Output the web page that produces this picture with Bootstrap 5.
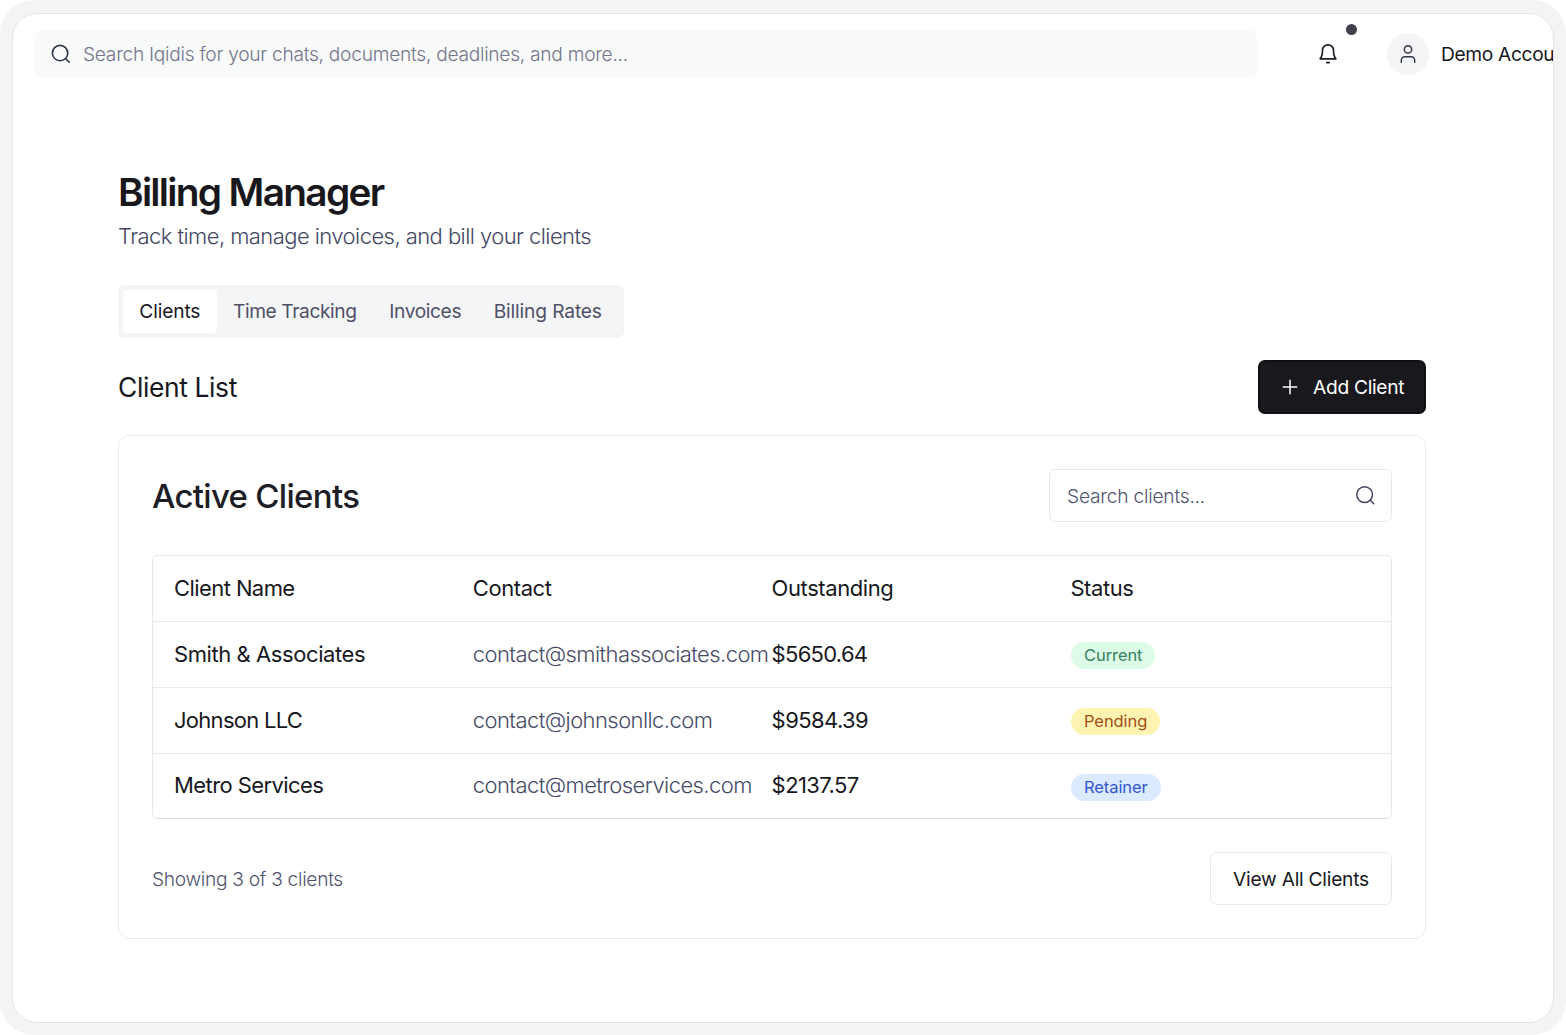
<!DOCTYPE html>
<html lang="en">
<head>
<meta charset="utf-8">
<meta name="viewport" content="width=device-width, initial-scale=1">
<title>Billing Manager</title>
<link href="https://cdn.jsdelivr.net/npm/bootstrap@5.3.0/dist/css/bootstrap.min.css" rel="stylesheet">
<style>
body{font-family:Inter,"Liberation Sans",sans-serif;font-size:22px;line-height:32px;color:#18181f;background:#fff}
.shell{height:1035px;padding:13px 12px 12px 12px;background:#f4f4f4;border-radius:34px}
.window{height:1010px;border:1.5px solid #e4e5e6;border-radius:25px;background:#fff}
.topbar{height:48px;margin:16px 0 0 22px}
.global-search{width:1222px;height:48px;border-radius:8px;background:#f9fafa;padding-left:15px;color:#74768d;font-size:19.2px;font-weight:300}
.global-search span{margin-left:11px;letter-spacing:-.28px}
.bell{margin-left:60px}
.alert-dot{width:11px;height:11px;top:-19px;left:29px;background:#41414d}
.avatar{width:42px;height:42px;margin-left:48px;background:#f4f5f6}
.account{margin-left:12px;font-size:19.2px;letter-spacing:-.34px;width:112px}
.content{width:1308px;margin:90px 0 0 105px}
.title-main{font-size:38.8px;line-height:48px;font-weight:600;letter-spacing:-1.68px;margin:0;color:#17171c}
.subtitle{color:#444863;font-weight:300;letter-spacing:-.56px;margin:4px 0 0}
.tabs-box{width:506px;height:53px;margin-top:33px;padding:5px;border-radius:7px;background:#f4f5f6;font-size:19.2px}
.tabs-box .nav-link{height:43px;padding:0 16.3px;line-height:43px;color:#4f5068;border-radius:4px;white-space:nowrap;letter-spacing:-.4px}
.tabs-box .nav-link.active{background:#fff;color:#18181f;letter-spacing:-.15px}
.tabs-box .nav-link.wide{letter-spacing:-.15px}
.list-head{height:54px;margin-top:22px}
.list-title{font-size:26.4px;line-height:36px;font-weight:400;letter-spacing:-.37px;margin:0}
.btn{--bs-btn-font-size:19.2px;--bs-btn-border-radius:7px;line-height:28px;white-space:nowrap}
.add-btn{width:168px;height:54px;background:#18181d;color:#fff;border:2px solid #101014;padding:0 0 0 20px}
.add-btn span{margin-left:13px;letter-spacing:-.3px}
.client-card{height:504px;margin-top:21px;padding:33px;border:1px solid #e8ebee;border-radius:11px}
.card-heading{font-size:33px;line-height:40px;font-weight:500;letter-spacing:-.7px;margin:0;color:#1d1d26}
.client-search{width:343px;height:53px;border:1px solid #e6eaee;border-radius:6px;padding:0 15px 0 17px;color:#50546f;font-size:19.2px;font-weight:300;letter-spacing:-.22px}
.client-grid{margin-top:33px;border:1px solid #e6eaee;border-bottom-color:#d3deea;border-radius:5px}
.client-row{display:grid;grid-template-columns:298.8px 298.8px 298.8px 1fr;height:65.8px;padding-left:21px;align-items:center;white-space:nowrap;letter-spacing:-.42px}
.client-row.head-row{height:65px}
.client-row>*{margin-top:-1px}
.client-row+.client-row{border-top:1px solid #e6ebf0}
.tight{letter-spacing:-.58px}
.tighter{letter-spacing:-.72px}
.mail{color:#484c68;font-weight:300;letter-spacing:-.57px}
.pill{display:inline-block;height:27px;line-height:27px;padding:0 13px;border-radius:14px;font-size:16.5px;letter-spacing:-.08px;vertical-align:middle;position:relative;top:0;left:.6px}
.pill-current{background:#dcfce7;color:#358261}
.pill-pending{background:#fef3b0;color:#a34f16}
.pill-retainer{background:#dbeafe;color:#3157cf}
.card-foot{margin-top:33px;height:53px}
.count{font-size:19.2px;font-weight:300;color:#50546f;letter-spacing:-.31px}
.view-btn{width:182px;height:53px;border:1px solid #e6eaee;padding:0;color:#18181f;letter-spacing:-.25px}
</style>
</head>
<body>
<div class="shell">
 <div class="window overflow-hidden">
  <header class="topbar d-flex align-items-center">
   <div class="global-search d-flex align-items-center flex-shrink-0">
    <svg width="22" height="22" viewBox="0 0 24 24" fill="none" stroke="#34344c" stroke-width="1.8" stroke-linecap="round"><circle cx="11" cy="11" r="8.4"/><path d="m21 21-4-4"/></svg>
    <span>Search Iqidis for your chats, documents, deadlines, and more...</span>
   </div>
   <div class="bell position-relative d-flex flex-shrink-0">
    <svg width="22" height="22" viewBox="0 0 24 24" fill="none" stroke="#1c1c28" stroke-width="1.8" stroke-linecap="round" stroke-linejoin="round"><path d="M6 8a6 6 0 0 1 12 0c0 6.500 2.600 9.300 2.600 9.300H3.400S6 14.500 6 8"/><path d="M10.700 21.200q1.300.500 2.600 0"/></svg>
    <span class="alert-dot position-absolute rounded-circle"></span>
   </div>
   <div class="avatar rounded-circle d-flex align-items-center justify-content-center flex-shrink-0">
    <svg width="22" height="22" viewBox="0 0 24 24" fill="none" stroke="#34344c" stroke-width="1.6" stroke-linecap="round" stroke-linejoin="round"><path d="M19.300 21v-2a4 4 0 0 0-4-4H8.700a4 4 0 0 0-4 4v2"/><circle cx="12" cy="7" r="4"/></svg>
   </div>
   <div class="account flex-shrink-0">Demo&nbsp;Accou</div>
  </header>

  <main class="content">
   <h1 class="title-main">Billing Manager</h1>
   <p class="subtitle">Track time, manage invoices, and bill your clients</p>

   <nav class="tabs-box nav flex-nowrap">
    <a class="nav-link active">Clients</a>
    <a class="nav-link">Time Tracking</a>
    <a class="nav-link">Invoices</a>
    <a class="nav-link wide">Billing Rates</a>
   </nav>

   <div class="list-head d-flex justify-content-between align-items-center">
    <h2 class="list-title">Client List</h2>
    <button class="btn add-btn d-flex align-items-center">
     <svg width="20" height="20" viewBox="0 0 20 20" fill="none" stroke="#fff" stroke-width="1.5" stroke-linecap="round"><path d="M10 3.3v13.4M3.3 10h13.4"/></svg>
     <span>Add Client</span>
    </button>
   </div>

   <section class="client-card">
    <div class="d-flex justify-content-between align-items-center">
     <h3 class="card-heading">Active Clients</h3>
     <div class="client-search d-flex justify-content-between align-items-center">
      <span>Search clients...</span>
      <svg width="21" height="21" viewBox="0 0 24 24" fill="none" stroke="#3f4260" stroke-width="1.7" stroke-linecap="round"><circle cx="11" cy="11" r="9"/><path d="m21.5 21.5-4-4"/></svg>
     </div>
    </div>

    <div class="client-grid">
     <div class="client-row head-row"><span class="tight">Client Name</span><span>Contact</span><span>Outstanding</span><span>Status</span></div>
     <div class="client-row"><span>Smith &amp; Associates</span><span class="mail">contact@smithassociates.com</span><span class="tighter">$5650.64</span><span><span class="pill pill-current">Current</span></span></div>
     <div class="client-row"><span class="tighter">Johnson LLC</span><span class="mail">contact@johnsonllc.com</span><span class="tight">$9584.39</span><span><span class="pill pill-pending">Pending</span></span></div>
     <div class="client-row"><span class="tight">Metro Services</span><span class="mail">contact@metroservices.com</span><span class="tight">$2137.57</span><span><span class="pill pill-retainer">Retainer</span></span></div>
    </div>

    <div class="card-foot d-flex justify-content-between align-items-center">
     <span class="count">Showing 3 of 3 clients</span>
     <button class="btn view-btn">View All Clients</button>
    </div>
   </section>
  </main>
 </div>
</div>
<script src="https://cdn.jsdelivr.net/npm/bootstrap@5.3.0/dist/js/bootstrap.bundle.min.js"></script>
</body>
</html>
